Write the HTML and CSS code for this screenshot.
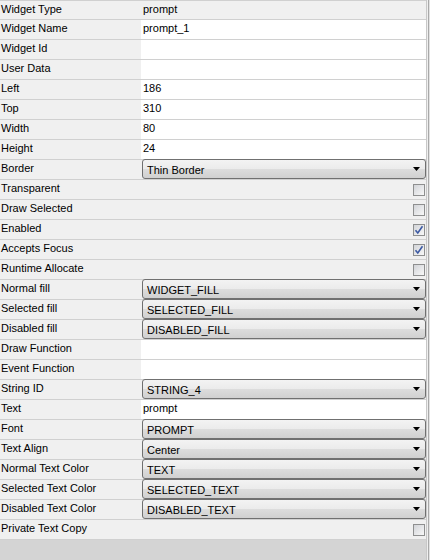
FILE: index.html
```html
<!DOCTYPE html>
<html lang="en">
<head>
    <meta charset="UTF-8">
    <meta name="viewport" content="width=device-width, initial-scale=1.0">
    <title>Widget Properties</title>
    <link rel="stylesheet" href="styles.css">
</head>
<body>
    <div class="panel">
        <div class="grid">
            <div class="row"><div class="label">Widget Type</div><div class="value readonly">prompt</div></div>
            <div class="row"><div class="label">Widget Name</div><div class="value">prompt_1</div></div>
            <div class="row"><div class="label">Widget Id</div><div class="value"></div></div>
            <div class="row"><div class="label">User Data</div><div class="value"></div></div>
            <div class="row"><div class="label">Left</div><div class="value">186</div></div>
            <div class="row"><div class="label">Top</div><div class="value">310</div></div>
            <div class="row"><div class="label">Width</div><div class="value">80</div></div>
            <div class="row"><div class="label">Height</div><div class="value">24</div></div>
            <div class="row"><div class="label">Border</div><div class="value combo-cell"><div class="combo"><span>Thin Border</span><span class="arrow"></span></div></div></div>
            <div class="row"><div class="label">Transparent</div><div class="value check-cell"><span class="check"></span></div></div>
            <div class="row"><div class="label">Draw Selected</div><div class="value check-cell"><span class="check"></span></div></div>
            <div class="row"><div class="label">Enabled</div><div class="value check-cell"><span class="check"><svg width="10" height="10" viewBox="0 0 10 10"><path d="M1.5 5.2 L3.8 8 L8.5 1.2" fill="none" stroke="#3d5aa3" stroke-width="1.6"/></svg></span></div></div>
            <div class="row"><div class="label">Accepts Focus</div><div class="value check-cell"><span class="check"><svg width="10" height="10" viewBox="0 0 10 10"><path d="M1.5 5.2 L3.8 8 L8.5 1.2" fill="none" stroke="#3d5aa3" stroke-width="1.6"/></svg></span></div></div>
            <div class="row"><div class="label">Runtime Allocate</div><div class="value check-cell"><span class="check"></span></div></div>
            <div class="row"><div class="label">Normal fill</div><div class="value combo-cell"><div class="combo"><span>WIDGET_FILL</span><span class="arrow"></span></div></div></div>
            <div class="row"><div class="label">Selected fill</div><div class="value combo-cell"><div class="combo"><span>SELECTED_FILL</span><span class="arrow"></span></div></div></div>
            <div class="row"><div class="label">Disabled fill</div><div class="value combo-cell"><div class="combo"><span>DISABLED_FILL</span><span class="arrow"></span></div></div></div>
            <div class="row"><div class="label">Draw Function</div><div class="value"></div></div>
            <div class="row"><div class="label">Event Function</div><div class="value"></div></div>
            <div class="row"><div class="label">String ID</div><div class="value combo-cell"><div class="combo"><span>STRING_4</span><span class="arrow"></span></div></div></div>
            <div class="row"><div class="label">Text</div><div class="value">prompt</div></div>
            <div class="row"><div class="label">Font</div><div class="value combo-cell"><div class="combo"><span>PROMPT</span><span class="arrow"></span></div></div></div>
            <div class="row"><div class="label">Text Align</div><div class="value combo-cell"><div class="combo"><span>Center</span><span class="arrow"></span></div></div></div>
            <div class="row"><div class="label">Normal Text Color</div><div class="value combo-cell"><div class="combo"><span>TEXT</span><span class="arrow"></span></div></div></div>
            <div class="row"><div class="label">Selected Text Color</div><div class="value combo-cell"><div class="combo"><span>SELECTED_TEXT</span><span class="arrow"></span></div></div></div>
            <div class="row"><div class="label">Disabled Text Color</div><div class="value combo-cell"><div class="combo"><span>DISABLED_TEXT</span><span class="arrow"></span></div></div></div>
            <div class="row"><div class="label">Private Text Copy</div><div class="value check-cell"><span class="check"></span></div></div>
        </div>
        <div class="edge"></div>
    </div>
</body>
</html>
```

FILE: styles.css
```css
body {
    margin: 0;
    font-family: "Liberation Sans", Arial, sans-serif;
    font-size: 11px;
    color: #000;
    background-color: #d4d4d4;
}
.panel {
    display: flex;
    height: 560px;
    background-color: #d4d4d4;
}
.grid {
    width: 426px;
    align-self: flex-start;
    border-top: 1px solid #d0d0d0;
}
.row {
    display: flex;
    height: 19px;
    border-bottom: 1px solid #d0d0d0;
    background-color: #f0f0f0;
}
.row:first-child {
    height: 18px;
}
.label {
    width: 140px;
    padding-left: 1px;
    line-height: 17px;
    white-space: nowrap;
}
.value {
    flex: 1;
    padding-left: 2px;
    line-height: 17px;
    background-color: #fff;
}
.value.readonly {
    background-color: #f0f0f0;
}
.combo-cell {
    background-color: #f0f0f0;
    padding-left: 1px;
}
.combo {
    display: flex;
    justify-content: space-between;
    align-items: center;
    height: 18px;
    margin-top: -1px;
    padding: 0 5px 0 4px;
    border: 1px solid #707070;
    border-radius: 3px;
    background: linear-gradient(#f3f3f3, #ebebeb 50%, #dddddd 50%, #d0d0d0);
    line-height: 16px;
}
.combo span:first-child {
    padding-top: 2px;
}
.arrow {
    width: 7px;
    height: 4px;
    background-color: #000;
    clip-path: polygon(0 0, 100% 0, 50% 100%);
}
.check-cell {
    display: flex;
    justify-content: flex-end;
    align-items: center;
    background-color: #f0f0f0;
    padding-right: 1px;
}
.check {
    display: flex;
    align-items: center;
    justify-content: center;
    width: 10px;
    height: 10px;
    border: 1px solid #8e8f8f;
    background: linear-gradient(135deg, #d2d4d8, #f8f8f8);
}
.edge {
    width: 4px;
    height: 560px;
    background: linear-gradient(to right, #c8c8c8 0, #c8c8c8 1px, #efefef 1px, #efefef 2px, #a9a9a9 2px, #a9a9a9 3px, #e2e2e2 3px);
}
```
